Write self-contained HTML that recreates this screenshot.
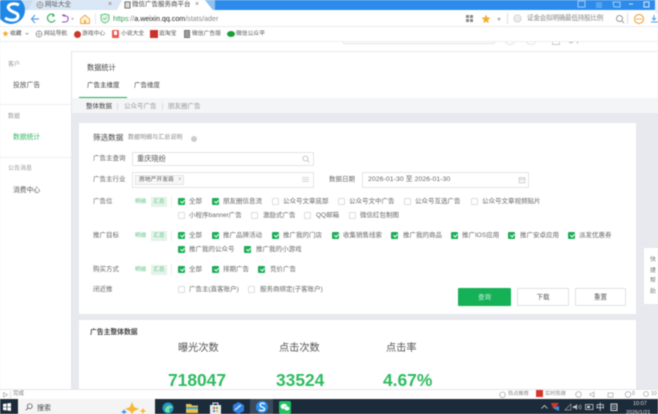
<!DOCTYPE html>
<html lang="zh-CN"><head><meta charset="utf-8"><title>微信广告服务商平台</title>
<style>
html,body{margin:0;padding:0;width:658px;height:414px;overflow:hidden;background:#e8e9ee}
body{font-family:"Liberation Sans","Noto Sans CJK SC",sans-serif;color:#555;position:relative}
#w{position:absolute;left:0;top:0;width:658px;height:414px;overflow:hidden;filter:blur(.45px)}
#w div,#w span,#w svg{position:absolute}
.t{white-space:nowrap;line-height:10px;height:10px;font-size:6.5px;color:#666}
.cb{width:7px;height:7px;box-sizing:border-box;border:1px solid #ddd;background:#fff;border-radius:1px}
.on{background:#1aad55;border-color:#1aad55}
.on:after{content:"";position:absolute;left:1.6px;top:.4px;width:1.6px;height:3px;border:solid #fff;border-width:0 1px 1px 0;transform:rotate(40deg)}
.lb{font-size:6.5px;color:#666}
.in{background:#fff;border:1px solid #e4e4e4;box-sizing:border-box;border-radius:1px}
.hz{background:#e3f3e8;width:16px;height:10px;color:#5cc184;font-size:5.5px;line-height:10px;text-align:center}
.mx{color:#5cc184;font-size:5.5px}
.btn{box-sizing:border-box;text-align:center;line-height:18px;font-size:6.5px;height:18px;border-radius:1px;background:#fff;border:1px solid #e2e2e2;color:#555}
</style></head><body><div id="w">

<!-- title bar -->
<div style="left:200px;top:0;width:458px;height:10px;background:#2d8ceb"></div>
<div style="left:0;top:0;width:205px;height:10px;background:#c7dcf3"></div>
<svg style="left:25px;top:0" width="190" height="10"><path d="M3 10L8 0H112L116 10Z" fill="#d9e6f5"/><path d="M92 10L97 0H180L188 10Z" fill="#fff"/><path d="M180 0H190L196 10H188Z" fill="#8fc0f0"/></svg>
<svg style="left:36px;top:1px" width="8" height="8" viewBox="0 0 8 8"><circle cx="4" cy="4" r="3" fill="none" stroke="#888" stroke-width=".7"/><path d="M1 4H7M4 1V7" stroke="#888" stroke-width=".5"/></svg>
<span class="t" style="left:45px;top:0;color:#555">网址大全</span>
<span class="t" style="left:108px;top:0;color:#777;font-size:7px">×</span>
<svg style="left:124px;top:1px" width="7" height="8"><rect x="1" y="1" width="5" height="6" fill="none" stroke="#666"/><path d="M2 3H5M2 5H5" stroke="#666" stroke-width=".6"/></svg>
<span class="t" style="left:132px;top:0;color:#444">微信广告服务商平台</span>
<span class="t" style="left:195px;top:0;color:#777;font-size:7px">×</span>
<svg style="left:577px;top:0" width="81" height="10"><rect x="1" y="1" width="7" height="6" fill="none" stroke="#9ccaf5"/><path d="M19 3H25M19 5H25M19 7H25" stroke="#9ccaf5" stroke-width=".7"/><path d="M36 2H43V7H37Z" fill="none" stroke="#bfe0fa" stroke-width=".8"/><path d="M52 4H56" stroke="#bfe0fa"/><rect x="67" y="2" width="5" height="5" fill="none" stroke="#d5eafc"/></svg>

<!-- address bar -->
<div style="left:0;top:10px;width:658px;height:16px;background:#fff;border-bottom:1px solid #ececec"></div>
<div style="left:-3px;top:-4px;width:28px;height:28px;border-radius:50%;background:#1f87e6"></div>
<svg style="left:0;top:0" width="26" height="25" viewBox="0 0 26 25"><path d="M19 5C13 2 6 5 9 9C12 13 19 12 18 17C17 21 10 21 5 18" fill="none" stroke="#fff" stroke-width="3"/></svg>
<svg style="left:30px;top:12px" width="30" height="13" viewBox="0 0 30 13"><path d="M9 7H2M5 3L1.500 7L5 11" fill="none" stroke="#5a9fe6" stroke-width="1.200"/><path d="M24 3A4 4 0 1 0 25 8" fill="none" stroke="#3fb35f" stroke-width="1.300"/><path d="M23 1L25 4L22 5Z" fill="#3fb35f"/></svg>
<svg style="left:60px;top:14px" width="16" height="10" viewBox="0 0 16 10"><path d="M2 1H5M3.500 1V2M3 2H6C9 2 9 8 5 8H2" fill="none" stroke="#8a4fc0" stroke-width="1.100"/><path d="M11 4H14L12.500 6Z" fill="#aaa"/></svg>
<svg style="left:79px;top:13px" width="12" height="12" viewBox="0 0 12 12"><path d="M1.500 6L6 2L10.500 6V10.500H1.500Z" fill="#fdf3dc" stroke="#eda94a" stroke-width="1"/><rect x="5" y="7" width="2" height="3" fill="#eda94a"/></svg>
<div style="left:95px;top:13px;width:1px;height:11px;background:#e5e5e5"></div>
<svg style="left:100px;top:13px" width="10" height="11"><path d="M1 2L5 1L9 2V6C9 8 7 9.500 5 10C3 9.500 1 8 1 6Z" fill="#e6f6ea" stroke="#62c27d" stroke-width="1"/><path d="M3 5L4.500 6.500L7 4" fill="none" stroke="#62c27d" stroke-width=".8"/></svg>
<span class="t" style="left:113px;top:14px;font-size:7.100px;color:#444"><b style="font-weight:400;color:#2f9e53">https</b><b style="font-weight:400;color:#888">://</b><b style="font-weight:400;color:#222">a.weixin.qq.com</b><b style="font-weight:400;color:#888">/stats/ader</b></span>
<svg style="left:466px;top:15px" width="8" height="8"><path d="M0 0H3V3H0ZM4 0H7V3H4ZM0 4H3V7H0ZM4 4H7V7H4Z" fill="#888"/></svg>
<svg style="left:481px;top:14px" width="10" height="10" viewBox="0 0 10 10"><path d="M5 .5L6.300 3.500L9.500 3.800L7 6L7.800 9.200L5 7.500L2.200 9.200L3 6L.5 3.800L3.700 3.500Z" fill="#f2ae2f"/></svg>
<svg style="left:497px;top:18px" width="5" height="3"><path d="M0 0H4L2 3Z" fill="#aaa"/></svg>
<div style="left:507px;top:13px;width:1px;height:11px;background:#ddd"></div>
<svg style="left:513px;top:14px" width="9" height="9"><circle cx="4.500" cy="4.500" r="3.500" fill="none" stroke="#bbb" stroke-width=".8"/><circle cx="4.500" cy="4.500" r="1.500" fill="none" stroke="#bbb" stroke-width=".6"/></svg>
<span class="t" style="left:527px;top:14px;font-size:6.600px;color:#888;letter-spacing:-.25px">证金会拟明确最低持股比例</span>
<svg style="left:615px;top:14px" width="10" height="10"><circle cx="4.500" cy="4.500" r="3" fill="none" stroke="#999"/><path d="M7 7L9 9" stroke="#999"/></svg>
<div style="left:627px;top:13px;width:1px;height:11px;background:#ddd"></div>
<svg style="left:633px;top:13px" width="12" height="12"><circle cx="6" cy="6" r="4.500" fill="none" stroke="#efa94a" stroke-width="1.200"/><path d="M3 6H9" stroke="#efa94a"/></svg>
<svg style="left:651px;top:15px" width="7" height="9"><path d="M3 0V5M1 3L3 5L5 3M0 7H7" fill="none" stroke="#4a9fe6"/></svg>
<div style="left:655px;top:0;width:3px;height:13px;background:#e9eef5"></div>

<!-- bookmarks -->
<div style="left:0;top:27px;width:658px;height:14px;background:#fff"></div>
<div style="left:0;top:41px;width:658px;height:1px;background:#eee"></div>
<svg style="left:2px;top:30px" width="7" height="7" viewBox="0 0 10 10"><path d="M5 .5L6.300 3.500L9.500 3.800L7 6L7.800 9.200L5 7.500L2.200 9.200L3 6L.5 3.800L3.700 3.500Z" fill="#f2ae2f"/></svg>
<span class="t" style="left:10px;top:29px;font-size:5.800px;color:#444">收藏</span>
<svg style="left:25px;top:33px" width="4" height="3"><path d="M0 0H4L2 2Z" fill="#aaa"/></svg>
<svg style="left:35px;top:30px" width="8" height="8" viewBox="0 0 8 8"><circle cx="4" cy="4" r="3" fill="none" stroke="#888" stroke-width=".7"/><path d="M1 4H7M4 1V7" stroke="#888" stroke-width=".5"/></svg>
<span class="t" style="left:44px;top:29px;font-size:5.800px;color:#555">网站导航</span>
<div style="left:74px;top:31px;width:7px;height:7px;border-radius:50%;background:#c9392b"></div>
<span class="t" style="left:82px;top:29px;font-size:5.800px;color:#555">游戏中心</span>
<div style="left:112px;top:30px;width:7px;height:8px;border-radius:1px;background:#e85a4f"></div><div style="left:114px;top:31px;width:3px;height:4px;background:#fff"></div>
<span class="t" style="left:121px;top:29px;font-size:5.800px;color:#555">小说大全</span>
<div style="left:150px;top:30px;width:8px;height:8px;background:#c9302c"></div>
<span class="t" style="left:159px;top:29px;font-size:5.800px;color:#555">逛淘宝</span>
<svg style="left:184px;top:30px" width="6" height="8"><rect width="6" height="8" fill="#777"/><path d="M1 2H5M1 4H5M1 6H5" stroke="#fff" stroke-width=".6"/></svg>
<span class="t" style="left:192px;top:29px;font-size:5.800px;color:#555">微信广告版</span>
<div style="left:227px;top:31px;width:8px;height:6px;border-radius:50%;background:#18a038"></div>
<span class="t" style="left:236px;top:29px;font-size:5.800px;color:#555">微信公众平</span>

<!-- page header strip (scrolled, clipped at the top) -->
<div style="left:0;top:42px;width:658px;height:9px;background:#fff;border-bottom:1px solid #eaeaea;overflow:hidden">
  <div style="left:343px;top:-4px;width:152px;height:6px;box-sizing:border-box;border:1px solid #e4e4e4"></div>
  <div style="left:504px;top:-9px;width:12px;height:12px;border-radius:50%;box-sizing:border-box;border:1px solid #e6e6e6"></div>
  <div style="left:525px;top:-9px;width:12px;height:12px;border-radius:50%;box-sizing:border-box;border:1px solid #e6e6e6"></div>
  <div style="left:552px;top:-4px;width:8px;height:7px;box-sizing:border-box;border:1px solid #ccc"></div>
  <span class="t" style="left:568px;top:-6px;color:#777;font-size:6.500px">@qidian.net</span>
</div>

<!-- sidebar -->
<div style="left:0;top:51px;width:71px;height:339px;background:#fff;border-right:1px solid #e6e6ea"></div>
<div style="left:0;top:104px;width:71px;height:1px;background:#eee"></div>
<div style="left:0;top:157px;width:71px;height:1px;background:#eee"></div>
<span class="t" style="left:8px;top:60px;color:#999;font-size:6px">客户</span>
<span class="t" style="left:13px;top:81px;color:#555;font-size:6.800px">投放广告</span>
<span class="t" style="left:8px;top:112px;color:#999;font-size:6px">数据</span>
<span class="t" style="left:13px;top:133px;color:#34b864;font-size:6.800px">数据统计</span>
<span class="t" style="left:8px;top:164px;color:#999;font-size:6px">公告消息</span>
<span class="t" style="left:13px;top:186px;color:#555;font-size:6.800px">消费中心</span>

<!-- tabs -->
<div style="left:72px;top:52px;width:586px;height:46px;background:#fff"></div>
<span class="t" style="left:87px;top:63px;font-size:7.200px;color:#444">数据统计</span>
<span class="t" style="left:87px;top:81px;font-size:6.500px;color:#333">广告主维度</span>
<span class="t" style="left:134px;top:81px;font-size:6.500px;color:#444">广告维度</span>
<div style="left:79px;top:97px;width:48px;height:1.500px;background:#1fae57"></div>
<div style="left:72px;top:98px;width:586px;height:15px;background:#f4f5f6"></div>
<span class="t" style="left:86px;top:102px;color:#444">整体数据</span>
<div style="left:117px;top:103px;width:1px;height:7px;background:#ddd"></div>
<span class="t" style="left:124px;top:102px;color:#999">公众号广告</span>
<div style="left:162px;top:103px;width:1px;height:7px;background:#ddd"></div>
<span class="t" style="left:168px;top:102px;color:#999">朋友圈广告</span>

<!-- card 1 -->
<div style="left:79px;top:123px;width:557px;height:191px;background:#fff"></div>
<span class="t" style="left:93px;top:133px;font-size:7.600px;color:#444">筛选数据</span>
<span class="t" style="left:128px;top:133px;font-size:6px;color:#888;letter-spacing:.05px">数据明细与汇总说明</span>
<div style="left:191px;top:136px;width:6px;height:6px;border-radius:50%;background:#ccc"></div>

<span class="t lb" style="left:93px;top:154px">广告主查询</span>
<div class="in" style="left:132px;top:152px;width:182px;height:14px"></div>
<span class="t" style="left:137px;top:154px;font-size:7.200px;color:#555">重庆晓纷</span>
<svg style="left:302px;top:155px" width="8" height="8"><circle cx="3.500" cy="3.500" r="2.500" fill="none" stroke="#bbb" stroke-width=".8"/><path d="M5.500 5.500L7.500 7.500" stroke="#bbb" stroke-width=".8"/></svg>

<span class="t lb" style="left:93px;top:175px">广告主行业</span>
<div class="in" style="left:132px;top:172px;width:182px;height:16px"></div>
<div style="left:135px;top:175px;width:49px;height:10px;box-sizing:border-box;border:1px solid #e4e4e4;background:#f7f7f7"></div>
<span class="t" style="left:139px;top:175px;font-size:5.800px;color:#555">房地产开发商</span>
<span class="t" style="left:178px;top:175px;font-size:6px;color:#aaa">×</span>
<svg style="left:302px;top:177px" width="7" height="5"><path d="M0 .5H7M0 2.500H7M0 4.500H7" stroke="#ccc" stroke-width=".7"/></svg>
<span class="t lb" style="left:329px;top:175px">数据日期</span>
<div class="in" style="left:362px;top:172px;width:167px;height:16px"></div>
<span class="t" style="left:368px;top:175px;font-size:6.800px;color:#666;letter-spacing:.1px">2026-01-30 至 2026-01-30</span>
<svg style="left:518px;top:176px" width="8" height="8"><rect x="1" y="1.500" width="6" height="5.500" fill="#f3f3f3" stroke="#ccc" stroke-width=".7"/><path d="M1 3H7" stroke="#ccc" stroke-width=".7"/></svg>

<span class="t lb" style="left:93px;top:197px">广告位</span>
<span class="t mx" style="left:135px;top:197px">明细</span>
<span class="hz" style="left:151px;top:197px">汇总</span>
<div style="left:171px;top:196px;width:1px;height:11px;background:#eee"></div>
<div class="cb on" style="left:178px;top:198px"></div><span class="t" style="left:189px;top:197px">全部</span>
<div class="cb on" style="left:212px;top:198px"></div><span class="t" style="left:223px;top:197px">朋友圈信息流</span>
<div class="cb" style="left:272px;top:198px"></div><span class="t" style="left:283px;top:197px">公众号文章底部</span>
<div class="cb" style="left:338px;top:198px"></div><span class="t" style="left:349px;top:197px">公众号文中广告</span>
<div class="cb" style="left:404px;top:198px"></div><span class="t" style="left:415px;top:197px">公众号互选广告</span>
<div class="cb" style="left:471px;top:198px"></div><span class="t" style="left:482px;top:197px">公众号文章视频贴片</span>
<div class="cb" style="left:178px;top:212px"></div><span class="t" style="left:189px;top:211px">小程序banner广告</span>
<div class="cb" style="left:251px;top:212px"></div><span class="t" style="left:263px;top:211px">激励式广告</span>
<div class="cb" style="left:304px;top:212px"></div><span class="t" style="left:316px;top:211px">QQ邮箱</span>
<div class="cb" style="left:349px;top:212px"></div><span class="t" style="left:360px;top:211px">微信红包制图</span>

<span class="t lb" style="left:93px;top:231px">推广目标</span>
<span class="t mx" style="left:135px;top:231px">明细</span>
<span class="hz" style="left:151px;top:231px">汇总</span>
<div style="left:171px;top:230px;width:1px;height:11px;background:#eee"></div>
<div class="cb on" style="left:178px;top:232px"></div><span class="t" style="left:189px;top:231px">全部</span>
<div class="cb on" style="left:212px;top:232px"></div><span class="t" style="left:223px;top:231px">推广品牌活动</span>
<div class="cb on" style="left:272px;top:232px"></div><span class="t" style="left:283px;top:231px">推广我的门店</span>
<div class="cb on" style="left:332px;top:232px"></div><span class="t" style="left:343px;top:231px">收集销售线索</span>
<div class="cb on" style="left:391px;top:232px"></div><span class="t" style="left:403px;top:231px">推广我的商品</span>
<div class="cb on" style="left:451px;top:232px"></div><span class="t" style="left:462px;top:231px">推广IOS应用</span>
<div class="cb on" style="left:508px;top:232px"></div><span class="t" style="left:520px;top:231px">推广安卓应用</span>
<div class="cb on" style="left:568px;top:232px"></div><span class="t" style="left:579px;top:231px">派发优惠券</span>
<div class="cb on" style="left:178px;top:246px"></div><span class="t" style="left:189px;top:245px">推广我的公众号</span>
<div class="cb on" style="left:244px;top:246px"></div><span class="t" style="left:256px;top:245px">推广我的小游戏</span>

<span class="t lb" style="left:93px;top:265px">购买方式</span>
<span class="t mx" style="left:135px;top:265px">明细</span>
<span class="hz" style="left:151px;top:265px">汇总</span>
<div style="left:171px;top:264px;width:1px;height:11px;background:#eee"></div>
<div class="cb on" style="left:178px;top:266px"></div><span class="t" style="left:189px;top:265px">全部</span>
<div class="cb on" style="left:212px;top:266px"></div><span class="t" style="left:223px;top:265px">排期广告</span>
<div class="cb on" style="left:258px;top:266px"></div><span class="t" style="left:270px;top:265px">竞价广告</span>

<span class="t lb" style="left:93px;top:285px">闭近推</span>
<div class="cb" style="left:178px;top:286px"></div><span class="t" style="left:189px;top:285px">广告主(直客账户)</span>
<div class="cb" style="left:248px;top:286px"></div><span class="t" style="left:260px;top:285px">服务商绑定(子客账户)</span>

<div class="btn" style="left:458px;top:288px;width:53px;background:#14b157;border-color:#14b157;color:#cdeedb">查询</div>
<div class="btn" style="left:517px;top:288px;width:52px">下载</div>
<div class="btn" style="left:575px;top:288px;width:51px">重置</div>

<!-- quick help -->
<div style="left:644px;top:248px;width:14px;height:56px;background:#fff"></div>
<span class="t" style="left:650px;top:255px;width:7px;height:auto;font-size:5.800px;line-height:10.500px;white-space:normal;color:#777">快<br>捷<br>帮<br>助</span>

<!-- card 2 -->
<div style="left:79px;top:320px;width:557px;height:70px;background:#fff"></div>
<span class="t" style="left:90px;top:328px;font-size:6.800px;font-weight:700;color:#444">广告主整体数据</span>
<span class="t" style="left:178px;top:344px;font-size:10.200px;color:#555">曝光次数</span>
<span class="t" style="left:279px;top:344px;font-size:10.200px;color:#555">点击次数</span>
<span class="t" style="left:386px;top:344px;font-size:10.200px;color:#555">点击率</span>
<span class="t" style="left:168px;top:375px;font-size:17.400px;font-weight:700;color:#2fbb60">718047</span>
<span class="t" style="left:276px;top:375px;font-size:17.400px;font-weight:700;color:#2fbb60">33524</span>
<span class="t" style="left:383px;top:375px;font-size:17.400px;font-weight:700;color:#2fbb60">4.67%</span>

<!-- status bar -->
<div style="left:0;top:389px;width:658px;height:10px;background:#fff;border-top:1px solid #e5e5e5;box-sizing:border-box"></div>
<svg style="left:3px;top:392px" width="5" height="6"><path d="M.5 .5V5L4.500 2.800Z" fill="none" stroke="#999" stroke-width=".6"/></svg>
<div style="left:10px;top:391px;width:1px;height:7px;background:#ddd"></div>
<span class="t" style="left:13px;top:389px;font-size:5.500px;color:#777">完成</span>
<svg style="left:499px;top:391px" width="7" height="7"><circle cx="3.500" cy="3.800" r="2.800" fill="none" stroke="#888" stroke-width=".6"/></svg>
<span class="t" style="left:508px;top:389px;font-size:5.200px;color:#888">热点推荐</span>
<div style="left:536px;top:390px;width:7px;height:7px;background:#d8352a"></div>
<span class="t" style="left:545px;top:389px;font-size:5.200px;color:#888">实时热搜</span>
<svg style="left:575px;top:391px" width="70" height="7"><circle cx="3.500" cy="3.500" r="2.800" fill="none" stroke="#999" stroke-width=".6"/><path d="M15 2.500H17L19 1V6L17 4.500H15Z" fill="none" stroke="#999" stroke-width=".6"/><rect x="33" y="2" width="5" height="4" fill="none" stroke="#999" stroke-width=".6"/><circle cx="53" cy="3.500" r="2.800" fill="none" stroke="#999" stroke-width=".6"/></svg>
<span class="t" style="left:632px;top:389px;font-size:5.200px;color:#888">0</span>
<svg style="left:643px;top:391px" width="7" height="7"><circle cx="3" cy="3" r="2.400" fill="none" stroke="#999" stroke-width=".6"/></svg>
<span class="t" style="left:651px;top:389px;font-size:5.200px;color:#888">10</span>

<!-- taskbar -->
<div style="left:0;top:399px;width:658px;height:15px;background:#1c2b3a"></div>
<svg style="left:3px;top:403px" width="8" height="8"><path d="M0 1L3.500 .5V3.700H0ZM4.200 .4L8 0V3.700H4.200ZM0 4.300H3.500V7.500L0 7ZM4.200 4.300H8V8L4.200 7.500Z" fill="#fff"/></svg>
<div style="left:18px;top:399px;width:137px;height:15px;background:#f4f4f4"></div>
<svg style="left:25px;top:403px" width="8" height="8"><circle cx="4.800" cy="3.200" r="2.400" fill="none" stroke="#444" stroke-width=".7"/><path d="M3 5L.8 7.200" stroke="#444" stroke-width=".7"/></svg>
<span class="t" style="left:37px;top:404px;font-size:7px;color:#444">搜索</span>
<svg style="left:120px;top:401px" width="34" height="13" viewBox="0 0 34 13"><path d="M12 1L14 6L19 8L14 10L12 13L10 10L5 8L10 6Z" fill="#f7b731"/><path d="M4 8L5 10L7 11L5 12L4 13L3 12L1 11L3 10Z" fill="#3d9be9"/><path d="M23 7L24 9L26 10L24 11L23 13L22 11L20 10L22 9Z" fill="#f7b731"/></svg>
<div style="left:250px;top:399px;width:23px;height:15px;background:#3a4a5a"></div>
<svg style="left:162px;top:402px" width="12" height="12"><circle cx="6" cy="6" r="5.500" fill="#1f9cc4"/><path d="M3 8C4 3 9 2 11 6C8 5 6 7 8 10C5 11 3 10 3 8Z" fill="#7be0a0"/></svg>
<svg style="left:186px;top:403px" width="12" height="10"><path d="M0 1H5L6 2.500H12V10H0Z" fill="#e8c14d"/><rect y="4" width="12" height="2" fill="#3fa0c8"/></svg>
<svg style="left:210px;top:402px" width="11" height="12"><path d="M0 3H11V12H0Z" fill="#e9edf0"/><path d="M3 4V1H8V4" fill="none" stroke="#e9edf0"/><rect x="3" y="5" width="2" height="2" fill="#e0533d"/><rect x="6" y="5" width="2" height="2" fill="#6ab344"/><rect x="3" y="8" width="2" height="2" fill="#2f8fde"/><rect x="6" y="8" width="2" height="2" fill="#f2b632"/></svg>
<svg style="left:233px;top:402px" width="11" height="12"><path d="M5.500 0L11 3V9L5.500 12L0 9V3Z" fill="#2d7fe0"/><path d="M2 8L8 3" stroke="#bfe0fa" stroke-width="1.500"/></svg>
<div style="left:256px;top:401px;width:12px;height:12px;border-radius:50%;background:#2a8fe8"></div>
<svg style="left:256px;top:401px" width="12" height="12"><path d="M9 3C6 1 3 3 4.500 5C6 7 9 6 8.500 8.500C8 10 5 10 3 9" fill="none" stroke="#fff" stroke-width="1.300"/></svg>
<div style="left:279px;top:401px;width:12px;height:13px;border-radius:2px;background:#1fc25f"></div>
<svg style="left:280px;top:403px" width="10" height="9"><ellipse cx="4" cy="3.500" rx="3.300" ry="2.700" fill="#fff"/><ellipse cx="7" cy="5.500" rx="2.700" ry="2.200" fill="#fff" stroke="#1fc25f" stroke-width=".5"/></svg>
<svg style="left:541px;top:405px" width="7" height="4"><path d="M.5 3.500L3.500 .5L6.500 3.500" fill="none" stroke="#ddd" stroke-width=".8"/></svg>
<svg style="left:551px;top:403px" width="8" height="8"><path d="M0 0H8L5 4L8 8L2 5Z" fill="#d8352a"/><path d="M2 5L8 8V3Z" fill="#3d8fe0"/></svg>
<svg style="left:564px;top:403px" width="8" height="8"><path d="M1 7L7 1V7Z" fill="none" stroke="#999" stroke-width=".7"/></svg>
<svg style="left:573px;top:403px" width="9" height="8"><path d="M0 3H2L4 1V7L2 5H0Z" fill="#ccc"/><path d="M5.500 2.500C6.500 3.500 6.500 4.500 5.500 5.500M7 1.500C8.500 3 8.500 5 7 6.500" fill="none" stroke="#ccc" stroke-width=".6"/></svg>
<svg style="left:585px;top:404px" width="9" height="6"><rect x=".5" y=".5" width="7.500" height="5" fill="none" stroke="#ddd" stroke-width=".7"/><rect x="2" y="2" width="3" height="2" fill="#ddd"/></svg>
<span class="t" style="left:596px;top:402px;height:10px;font-size:8.500px;color:#eee">中</span>
<svg style="left:610px;top:403px" width="8" height="8"><rect x="1" y="1" width="6" height="6.500" fill="none" stroke="#eee" stroke-width=".9"/><path d="M2 3.200H6M2 5.200H6" stroke="#eee" stroke-width=".7"/></svg>
<span class="t" style="left:633px;top:399px;font-size:5.500px;color:#ddd">10:07</span>
<span class="t" style="left:626px;top:408px;font-size:5.500px;color:#ddd">2026/1/21</span>

</div></body></html>
